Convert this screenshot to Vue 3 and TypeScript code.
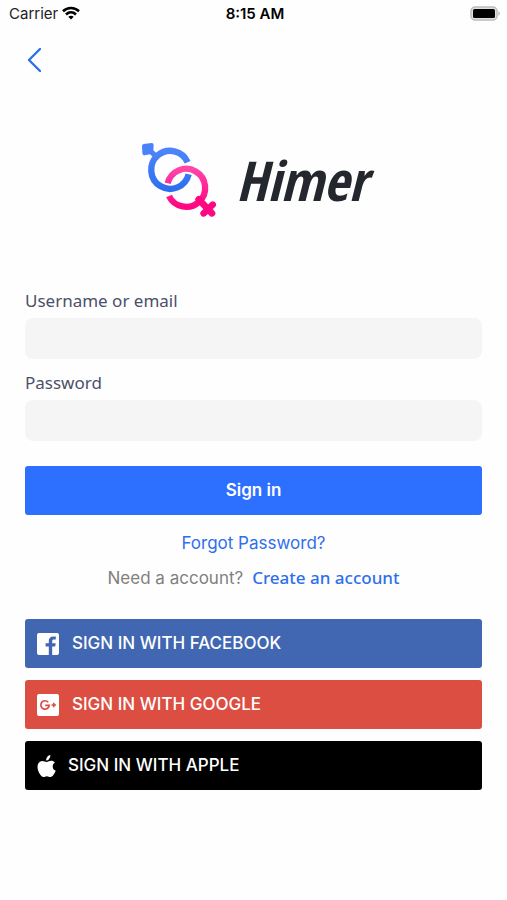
<script setup lang="ts">
import { ref } from 'vue'

const username = ref('')
const password = ref('')

const providers = [
  { id: 'facebook', label: 'SIGN IN WITH FACEBOOK' },
  { id: 'google', label: 'SIGN IN WITH GOOGLE' },
  { id: 'apple', label: 'SIGN IN WITH APPLE' },
]
</script>

<template>
  <div class="screen">
    <div class="status">
      <div class="carrier">
        <span>Carrier</span>
        <svg width="18" height="14" viewBox="0 0 18 14" aria-hidden="true">
          <g fill="none" stroke="#000" stroke-width="2.6">
            <path d="M1 5.2C5.500 0.900 12.500 0.900 17 5.200" />
            <path d="M4 8.500C7 5.700 11 5.700 14 8.500" />
          </g>
          <path d="M6.300 10.700C7.800 9.300 10.200 9.300 11.700 10.700L9 13.600Z" />
        </svg>
      </div>
      <div class="time">8:15 AM</div>
      <svg class="battery" width="31" height="15" viewBox="0 0 31 15" aria-hidden="true">
        <rect x="1" y="1" width="26" height="13" rx="4" fill="#e0e0e0" stroke="#bcbcbc" stroke-width="1.500" />
        <rect x="3" y="3" width="22" height="9" rx="1.500" />
        <path d="M28.500 5Q31 7.500 28.500 10Z" fill="#a8a8a8" />
      </svg>
    </div>

    <header>
      <button class="back" type="button" aria-label="Back">
        <svg width="16" height="26" viewBox="0 0 16 26" aria-hidden="true">
          <path d="M15 2L4 13L15 24" fill="none" stroke="#2f6fec" stroke-width="2.400" stroke-linecap="round" stroke-linejoin="round" />
        </svg>
      </button>
    </header>

    <div class="brand">
      <svg width="78" height="77" viewBox="30 33 234 231" aria-hidden="true">
        <defs>
          <linearGradient id="male" x1="0" y1="0" x2="0" y2="1">
            <stop offset="0" stop-color="#4d84fb" />
            <stop offset="1" stop-color="#2e6ff0" />
          </linearGradient>
          <linearGradient id="female" x1="0" y1="0" x2="0" y2="1">
            <stop offset="0" stop-color="#ff45a8" />
            <stop offset="1" stop-color="#ff0783" />
          </linearGradient>
        </defs>
        <path d="M173 97A57 57 0 1 0 176 133" fill="none" stroke="url(#male)" stroke-width="19" />
        <path d="M41 42L65 39Q71 39 71 45L70 61L88 77L76 87L60 73L44 76Q38 77 37 70L36 48Q36 43 41 42Z" fill="#4a82fa" />
        <path d="M113 160A57 57 0 1 1 117 198" fill="none" stroke="url(#female)" stroke-width="19" />
        <path d="M206 208L246 250M221 250L248 224" fill="none" stroke="#ff0783" stroke-width="20" stroke-linecap="round" />
      </svg>
      <span class="name">Himer</span>
    </div>

    <form @submit.prevent>
      <label for="username">Username or email</label>
      <input id="username" v-model="username" type="text" autocomplete="username" />
      <label for="password">Password</label>
      <input id="password" v-model="password" type="password" autocomplete="current-password" />
      <button class="btn primary" type="submit">Sign in</button>
    </form>

    <a class="forgot" href="#forgot">Forgot Password?</a>
    <p class="signup">
      <span>Need a account?</span>
      <a href="#create">Create an account</a>
    </p>

    <div class="social">
      <button v-for="p in providers" :key="p.id" type="button" class="btn provider" :class="p.id">
        <svg v-if="p.id === 'facebook'" width="22" height="22" viewBox="0 0 22 22" aria-hidden="true">
          <path fill="#fff" d="M2 0H20Q22 0 22 2V20Q22 22 20 22H15.200V13.600H18.200L18.700 10.200H15.200V8.200C15.200 7.100 15.700 6.600 16.900 6.600H18.800V3.600C18.200 3.500 17.300 3.400 16.300 3.400C13.500 3.400 11.800 5 11.800 7.800V10.200H8.600V13.600H11.800V22H2Q0 22 0 20V2Q0 0 2 0Z" />
        </svg>
        <svg v-else-if="p.id === 'google'" width="22" height="22" viewBox="0 0 22 22" aria-hidden="true">
          <rect width="22" height="22" rx="2" fill="#fff" />
          <path d="M11.200 8.200A4.200 4.200 0 1 0 12.200 11.400H8.200M14.500 11H19M16.750 8.800V13.200" fill="none" stroke="#dc4e41" stroke-width="1.700" />
        </svg>
        <svg v-else width="19" height="22" viewBox="0 0 19 22" aria-hidden="true">
          <path fill="#fff" d="M13.300 0C13.500 1.600 12.900 2.900 12.100 3.900C11.300 4.900 10.200 5.500 9.200 5.400C9 3.900 9.600 2.600 10.400 1.700C11.200 0.800 12.400 0.100 13.300 0ZM17.900 7.500C16.500 8.400 15.700 9.700 15.700 11.400C15.700 13.400 16.900 15 18.700 15.700C18.200 17.200 17.300 18.900 16.200 20.300C15.300 21.500 14.500 22 13.400 22C12.100 22 11.500 21.200 9.900 21.200C8.300 21.200 7.700 22 6.500 22C5.300 22 4.400 21.200 3.500 20C0.900 16.500 -0.200 12.300 1 9.200C1.800 7.200 3.500 5.900 5.400 5.900C7.100 5.900 8.200 6.900 9.700 6.900C11 6.900 12.300 5.800 14.200 5.800C15.700 5.800 17 6.400 17.900 7.500Z" />
        </svg>
        <span>{{ p.label }}</span>
      </button>
    </div>
  </div>
</template>

<style>
body {
  background: #fefefe;
}
</style>

<style scoped>
.screen {
  min-height: 100vh;
  box-sizing: border-box;
  font-family: Inter, "Liberation Sans", sans-serif;
  font-size: 17px;
  color: #000;
}

.status {
  display: grid;
  grid-template-columns: 1fr auto 1fr;
  align-items: center;
  height: 26px;
  padding: 0 6px 0 9px;
  font-size: 15px;
}

.carrier {
  display: flex;
  align-items: center;
  gap: 4px;
  color: #222;
}

.time {
  font-weight: 600;
}

.battery {
  justify-self: end;
}

header {
  display: flex;
  padding: 21px 25px 0;
}

.back {
  display: flex;
  padding: 0;
  border: 0;
  background: none;
}

.brand {
  display: flex;
  align-items: center;
  justify-content: center;
  gap: 18px;
  height: 77px;
  padding-top: 68px;
}

.name {
  font-family: "Liberation Sans Narrow", "Open Sans Condensed", "DejaVu Sans Condensed", sans-serif;
  font-size: 55px;
  font-style: italic;
  font-weight: 700;
  line-height: 77px;
  color: #24272d;
}

form {
  display: flex;
  flex-direction: column;
  padding: 71px 25px 0;
}

label {
  font-family: "Noto Sans", sans-serif;
  font-size: 17px;
  line-height: 24px;
  margin-bottom: 5px;
  color: #4a5068;
}

input {
  height: 41px;
  box-sizing: border-box;
  margin: 0 0 12px;
  padding: 0 12px;
  border: 0;
  border-radius: 8px;
  background: #f5f5f5;
  font: inherit;
}

.btn {
  height: 49px;
  padding: 0 12px 2px;
  border: 0;
  border-radius: 3px;
  color: #fff;
  font: inherit;
}

.primary {
  margin-top: 13px;
  background: #2d70ff;
  font-weight: 600;
}

a {
  color: #2f6fec;
  text-decoration: none;
}

.forgot {
  display: block;
  width: fit-content;
  margin: 16px auto 0;
  line-height: 24px;
}

.signup {
  display: flex;
  justify-content: center;
  gap: 9px;
  margin: 11px 0 0;
  line-height: 24px;
  color: #808080;
}

.signup a {
  font-family: "Noto Sans", sans-serif;
  font-weight: 500;
}

.social {
  display: flex;
  flex-direction: column;
  gap: 12px;
  padding: 29px 25px 0;
}

.provider {
  display: flex;
  align-items: center;
  gap: 13px;
  font-weight: 500;
}

.provider svg {
  margin-top: 3px;
}

.facebook {
  background: #4267b2;
}

.google {
  background: #dc4e41;
}

.apple {
  gap: 12px;
  background: #000;
}
</style>
